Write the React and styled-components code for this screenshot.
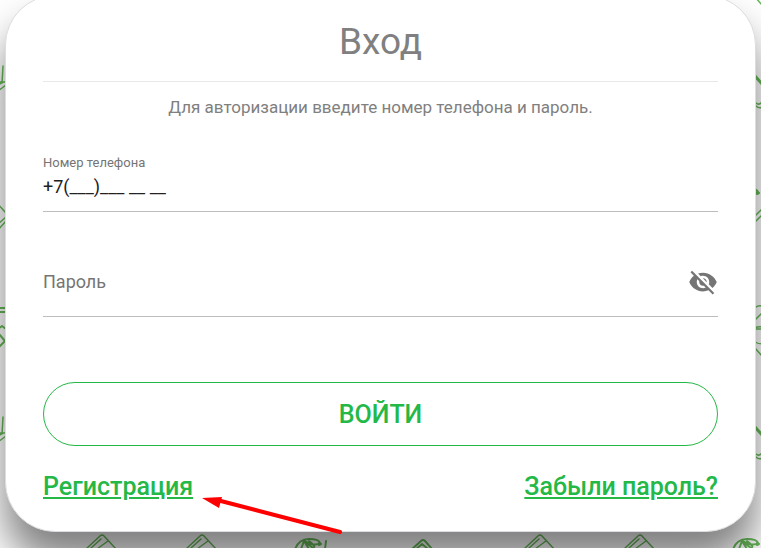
import React, { useState } from "react"
import styled, { createGlobalStyle } from 'styled-components'

const GlobalStyle = createGlobalStyle`
    * {
        box-sizing: border-box;
    }
    body {
        margin: 0;
        overflow: hidden;
        background-color: white;
        font-family: Roboto, 'Liberation Sans', sans-serif;
    }
`

const Page = styled.main`
    position: relative;
    display: flex;
    flex-direction: column;
    min-height: 100vh;
    padding: 0 5px;
`

const Backdrop = styled.svg`
    position: absolute;
    top: 0;
    left: 0;
    width: 100%;
    height: 100%;
    fill: none;
    stroke: #66b858;
`

const Card = styled.form`
    position: relative;
    margin-top: -5px;
    padding: 16px 37px 28px;
    background-color: white;
    border: 1px solid #dcdde0;
    border-radius: 50px;
    box-shadow: 0 30px 40px rgba(0, 0, 0, 0.5);
`

const Title = styled.h1`
    margin: 0;
    padding-bottom: 9px;
    border-bottom: 1px solid #e8e8e8;
    color: gray;
    font-size: 37px;
    font-weight: 400;
    line-height: 60px;
    text-align: center;
`

const Hint = styled.p`
    margin: 13px 0 34px;
    color: gray;
    font-size: 17px;
    line-height: 24px;
    text-align: center;
`

const Field = styled.div`
    display: grid;
    grid-template-columns: 1fr auto;
    align-items: center;
    height: ${props => props.$tall ? '70px' : '59px'};
    margin-bottom: ${props => props.$tall ? '65px' : '35px'};
    border-bottom: 1px solid #bdbdbd;
    padding-bottom: ${props => props.$tall ? '0' : '12px'};
`

const Label = styled.label`
    grid-area: 1 / 1;
    color: #757575;
    font-size: ${props => props.$small ? '13px' : '18px'};
    line-height: 20px;
`

const Input = styled.input`
    grid-area: ${props => props.$row} / 1;
    width: 100%;
    height: 26px;
    padding: 0;
    border: 0;
    outline: 0;
    background: transparent;
    color: #212121;
    font-family: inherit;
    font-size: 18px;
`

const EyeButton = styled.button`
    display: flex;
    padding: 0;
    border: 0;
    background: none;
    color: #757575;
    cursor: pointer;
`

const Submit = styled.button`
    display: block;
    width: 100%;
    height: 64px;
    border: 1px solid #24b847;
    border-radius: 32px;
    background: white;
    color: #24b847;
    font-family: inherit;
    font-size: 25px;
    font-weight: 500;
    cursor: pointer;
`

const Links = styled.div`
    display: flex;
    justify-content: space-between;
    margin-top: 25px;
`

const LinkBox = styled.div`
    position: relative;
`

const Link = styled.a`
    color: #24b847;
    font-size: 25px;
    font-weight: 500;
    line-height: 32px;
`

const Arrow = styled.svg`
    position: absolute;
    top: 20px;
    left: 100%;
    margin-left: 8px;
    pointer-events: none;
`

function Doodles (){

return (
    <Backdrop aria-hidden="true">
        <defs>
            <pattern id="doodles" x="-5" y="120" width="438" height="351" patternUnits="userSpaceOnUse" viewBox="-5 120 438 351">
                <g strokeWidth="1.5" strokeLinecap="round" strokeLinejoin="round">
                    {/* notebooks */}
                    <path d="M86 198 L100 185 Q102 183 104 185 L117 199 M97 198 L108 190 M91 197 L101 188" />
                    <path d="M186 198 L200 185 Q202 183 204 185 L217 199 M197 198 L208 190 M191 197 L201 188" />
                    <path d="M411 199 L421 190 Q423 188 425 190 L433 199 M415 199 L422 193 L428 198" strokeWidth="2" />
                    {/* leaves */}
                    <path d="M295 198 Q299 188 309 188 Q319 188 320 192 Q315 196 304 190 M304 190 L301 198 M304 190 L309 198 M309 190 Q317 196 313 197 L305 191 M326 190 L325 198" strokeWidth="2" />
                    {/* pencils and cups */}
                    <path d="M-4 202 L6 213 M6 217 L-3 225 M6 221 L-3 231" />
                    <path d="M318 215 L325 208 M318 221 L325 214" />
                    <path d="M319 192 L321 193 L319 194" strokeWidth="2" />
                    <path d="M-5 308 H7 M-5 312 H7" strokeWidth="2" />
                    <path d="M-2 329 L2 326 L6 329 M-1 334 L5 341 L-1 347" strokeWidth="2" />
                    <path d="M318 307 Q320 305 325 306 M318 319 L325 312 M317 328 Q320 326 325 327 M317 329 H325 M317 342 Q320 344 325 344 M317 348 L324 356" />
                    <path d="M3 417 L2 434 M-3 433 H6 M6 436 L-2 442 M-2 436 L3 433" />
                    <path d="M317 427 L325 436" strokeWidth="3" />
                    <path d="M325 452 Q321 457 318 454 M318 457 Q321 460 325 458" />
                </g>
            </pattern>
        </defs>
        <rect width="100%" height="100%" fill="url(#doodles)" stroke="none" />
    </Backdrop>
)

}

function App (){

const [phone, setPhone] = useState('+7(___)___ __ __')
const [password, setPassword] = useState('')
const [visible, setVisible] = useState(false)

return (
    <>
        <GlobalStyle />
        <Page>
            <Doodles />
            <Card onSubmit={e => e.preventDefault()}>
                <Title>Вход</Title>
                <Hint>Для авторизации введите номер телефона и пароль.</Hint>
                <Field>
                    <Label htmlFor="phone" $small>Номер телефона</Label>
                    <Input id="phone" type="tel" $row={2} value={phone} onChange={e => setPhone(e.target.value)} />
                </Field>
                <Field $tall>
                    {!password && <Label htmlFor="password">Пароль</Label>}
                    <Input id="password" type={visible ? 'text' : 'password'} $row={1} value={password} onChange={e => setPassword(e.target.value)} />
                    <EyeButton type="button" aria-label="Показать пароль" onClick={() => setVisible(!visible)}>
                        <svg width="30" height="30" viewBox="0 0 24 24" fill="currentColor">
                            <path d="M12 7c2.76 0 5 2.24 5 5 0 .65-.13 1.26-.36 1.83l2.92 2.92c1.51-1.26 2.7-2.89 3.43-4.75-1.73-4.39-6-7.5-11-7.5-1.4 0-2.74.25-3.98.7l2.16 2.16C10.74 7.13 11.35 7 12 7zM2 4.27l2.28 2.28.46.46C3.08 8.3 1.78 10.02 1 12c1.73 4.39 6 7.5 11 7.5 1.55 0 3.03-.3 4.38-.84l.42.42L19.73 22 21 20.73 3.27 3 2 4.27zM7.53 9.8l1.55 1.55c-.05.21-.08.43-.08.65 0 1.66 1.34 3 3 3 .22 0 .44-.03.65-.08l1.55 1.55c-.67.33-1.41.53-2.2.53-2.76 0-5-2.24-5-5 0-.79.2-1.53.53-2.2zm4.31-.78l3.15 3.15.02-.16c0-1.66-1.34-3-3-3l-.17.01z" />
                        </svg>
                    </EyeButton>
                </Field>
                <Submit type="submit">ВОЙТИ</Submit>
                <Links>
                    <LinkBox>
                        <Link href="#register">Регистрация</Link>
                        <Arrow width="144" height="44" viewBox="0 0 144 44" aria-hidden="true">
                            <path d="M16 9 L139 41" stroke="red" strokeWidth="4" strokeLinecap="round" />
                            <path d="M1 7 L21 6 L18 17 Z" fill="red" />
                        </Arrow>
                    </LinkBox>
                    <Link href="#forgot">Забыли пароль?</Link>
                </Links>
            </Card>
        </Page>
    </>
)

}

export default App
